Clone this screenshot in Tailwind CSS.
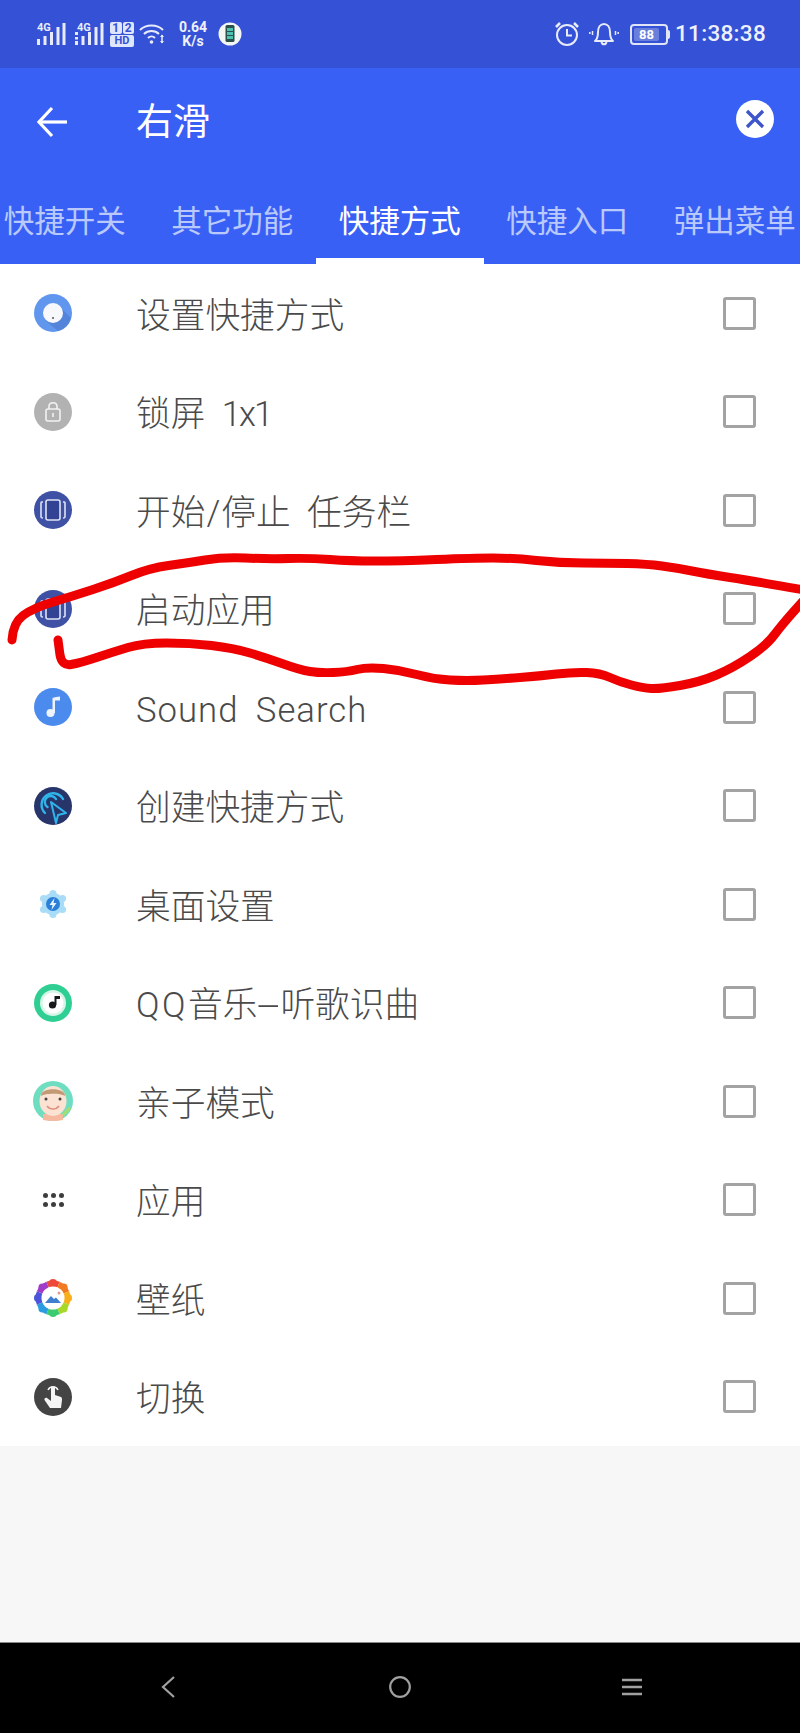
<!DOCTYPE html>
<html lang="zh-CN">
<head>
    <meta charset="UTF-8">
    <meta name="viewport" content="width=device-width, initial-scale=1.0">
    <title>右滑</title>
    <script src="https://cdn.jsdelivr.net/npm/@tailwindcss/browser@4"></script>
</head>
<body class="relative w-[800px] h-[1733px] overflow-hidden bg-[#f7f7f7] font-['Roboto','Noto_Sans_CJK_SC',sans-serif]">

    <!-- status bar -->
    <div class="h-[68px] bg-[#3551d5] flex items-center justify-between text-white pl-[37px] pr-[34px]">
        <div class="flex items-center">
            <svg width="29" height="24" viewBox="0 0 29 24" fill="#e8ecfa" class="mr-[9px]">
                <text x="0" y="9" font-size="11" font-weight="700" font-family="Roboto">4G</text>
                <rect x="0" y="17" width="3" height="6"/><rect x="6.5" y="14" width="3" height="9"/><rect x="13" y="10" width="3" height="13"/><rect x="19.5" y="5" width="3" height="18"/><rect x="25.5" y="1" width="3" height="22"/>
            </svg>
            <svg width="29" height="24" viewBox="0 0 29 24" fill="#e8ecfa" class="mr-[6px]">
                <text x="2" y="9" font-size="11" font-weight="700" font-family="Roboto">4G</text>
                <rect x="0" y="10" width="3" height="3"/><rect x="0" y="15" width="3" height="2.5"/><rect x="0" y="19" width="3" height="4"/><rect x="6.5" y="14" width="3" height="9"/><rect x="13" y="10" width="3" height="13"/><rect x="19.5" y="5" width="3" height="18"/><rect x="25.5" y="1" width="3" height="22"/>
            </svg>
            <div class="w-[24px] h-[25px] grid grid-cols-2 gap-[1px] mr-[5px] text-[#3551d5] text-[12px] leading-[12px] font-bold text-center">
                <span class="bg-[#dfe5fa] rounded-[2px]">1</span>
                <span class="bg-[#dfe5fa] rounded-[2px]">2</span>
                <span class="col-span-2 bg-[#dfe5fa] rounded-[2px] text-[11px]">HD</span>
            </div>
            <svg width="27" height="24" viewBox="0 0 27 24" fill="none" stroke="#e8ecfa" stroke-width="2" class="mr-[12px]">
                <path d="M1 8 C7 2 18 2 24 8"/><path d="M5 12 C9 8 16 8 20 12"/><path d="M9 16 C11 14 14 14 16 16"/>
                <circle cx="12.5" cy="20" r="1.8" fill="#e8ecfa" stroke="none"/>
                <path d="M23 13 v8" stroke-width="1.5"/><path d="M21 15 l2 -2.5 l2 2.5 z M21 19 l2 2.5 l2 -2.5 z" fill="#e8ecfa" stroke="none"/>
            </svg>
            <div class="w-[30px] text-center text-[#eef1fc] text-[14px] leading-[14px] font-bold mr-[10px]">0.64<br>K/s</div>
            <svg width="24" height="24" viewBox="0 0 24 24">
                <circle cx="12" cy="12" r="11.5" fill="#f4f6f4"/>
                <rect x="7.5" y="3" width="9" height="17" rx="1.5" fill="#2b4f4a"/>
                <rect x="9" y="6" width="6" height="3" fill="#4cc3b0"/><rect x="9" y="10" width="6" height="3" fill="#4cc3b0"/><rect x="9" y="14" width="6" height="3" fill="#4cc3b0"/>
            </svg>
        </div>
        <div class="flex items-center">
            <svg width="26" height="26" viewBox="0 0 26 26" fill="none" stroke="#e8ecfa" stroke-width="2" class="mr-[9px]">
                <circle cx="13" cy="14" r="10"/><path d="M13 8 v6.5 h5"/><path d="M2 6 l4 -4 M24 6 l-4 -4" stroke-width="2.5"/>
            </svg>
            <svg width="30" height="24" viewBox="0 0 30 24" fill="none" stroke="#e8ecfa" stroke-width="2" class="mr-[11px]">
                <path d="M6 19 C8.5 17 9 14 9 10 C9 5 11.5 2 15 2 C18.5 2 21 5 21 10 C21 14 21.5 17 24 19 Z" stroke-linejoin="round"/>
                <path d="M12.5 20 C13 23 17 23 17.5 20"/>
                <path d="M3.5 9 v4 M0.8 10 v2 M26.5 9 v4 M29.2 10 v2" stroke-width="1.5"/>
            </svg>
            <div class="relative w-[38px] h-[21px] border-2 border-[#dfe4f7] rounded-[4px] mr-[7px] p-[2px]">
                <div class="h-full w-[25px] bg-[#6a7fdc] rounded-[2px] flex items-center justify-center text-[13px] font-bold text-white leading-none">88</div>
                <div class="absolute right-[-4px] top-[4px] w-[2px] h-[9px] bg-[#dfe4f7] rounded-r-[2px]"></div>
            </div>
            <span class="text-[22.5px] font-medium tracking-[0.3px] text-[#eef1fc]">11:38:38</span>
        </div>
    </div>

    <!-- toolbar -->
    <div class="h-[196px] bg-[#3960f5] flex flex-col text-white">
        <div class="h-[106px] flex items-center">
            <svg width="32" height="32" viewBox="0 0 32 32" fill="none" stroke="white" stroke-width="3.2" class="ml-[36px] mr-[68px] mt-[2px]">
                <path d="M31 16 H3"/><path d="M16 2 L3 16 L16 30"/>
            </svg>
            <span class="text-[37px] leading-none mt-[3px]">右滑</span>
            <div class="ml-auto mr-[26px] mt-[-4px] w-[38px] h-[38px] rounded-full bg-white flex items-center justify-center">
                <svg width="20" height="20" viewBox="0 0 20 20" stroke="#3f55cc" stroke-width="3.4"><path d="M2 2 L18 18 M18 2 L2 18"/></svg>
            </div>
        </div>
        <div class="flex-1 flex ml-[-19px] text-[30.5px] text-[#b9c9fb]">
            <div class="w-[167.5px] shrink-0 flex items-center justify-center pt-[11px] border-b-[6px] border-transparent">快捷开关</div>
            <div class="w-[167.5px] shrink-0 flex items-center justify-center pt-[11px] border-b-[6px] border-transparent">其它功能</div>
            <div class="w-[167.5px] shrink-0 flex items-center justify-center pt-[11px] border-b-[6px] text-white border-white">快捷方式</div>
            <div class="w-[167.5px] shrink-0 flex items-center justify-center pt-[11px] border-b-[6px] border-transparent">快捷入口</div>
            <div class="w-[167.5px] shrink-0 flex items-center justify-center pt-[11px] border-b-[6px] border-transparent">弹出菜单</div>
        </div>
    </div>

    <!-- list -->
    <div class="bg-white grid grid-cols-1 auto-rows-[98.5px] text-[34.7px] text-[#4a4a4a] font-light">

        <div class="flex items-center pl-[34px] pr-[44px]">
            <svg width="38" height="38" viewBox="0 0 38 38">
                <circle cx="19" cy="19" r="19" fill="#6096ee"/>
                <path d="M11 26 L25 12 L37 24 A19 19 0 0 1 24 37 Z" fill="#5484da"/>
                <circle cx="19" cy="19" r="10" fill="#f6f8fc"/>
                <circle cx="19" cy="24" r="1" fill="#555"/>
            </svg>
            <span class="ml-[64px] pt-[5px] flex-1">设置快捷方式</span>
            <div class="w-[33px] h-[33px] border-[3px] border-[#a3a3a3] rounded-[3px]"></div>
        </div>

        <div class="flex items-center pl-[34px] pr-[44px]">
            <svg width="38" height="38" viewBox="0 0 38 38">
                <circle cx="19" cy="19" r="19" fill="#b2b2b2"/>
                <rect x="12" y="16" width="14" height="12" rx="2" fill="none" stroke="#f2f2f2" stroke-width="1.6"/>
                <path d="M15 16 V13.5 C15 8.5 23 8.5 23 13.5 V16" fill="none" stroke="#f2f2f2" stroke-width="1.6"/>
                <rect x="18.2" y="20" width="1.6" height="4" fill="#f2f2f2"/>
            </svg>
            <span class="ml-[64px] pt-[5px] flex-1">锁屏 <span class="ml-[8px] tracking-[-2px]">1x1</span></span>
            <div class="w-[33px] h-[33px] border-[3px] border-[#a3a3a3] rounded-[3px]"></div>
        </div>

        <div class="flex items-center pl-[34px] pr-[44px]">
            <svg width="38" height="38" viewBox="0 0 38 38">
                <circle cx="19" cy="19" r="19" fill="#3f51a5"/>
                <rect x="12" y="9" width="14" height="20" rx="2" fill="#324394" stroke="#dfe3f4" stroke-width="1.6"/>
                <path d="M9 11 H7.5 Q7 11 7 12 V26 Q7 27 9 27 M29 11 H30.5 Q31 11 31 12 V26 Q31 27 29 27" fill="none" stroke="#dfe3f4" stroke-width="1.6"/>
            </svg>
            <span class="ml-[64px] pt-[5px] flex-1">开始<span class="px-[1px]">/</span>停止 <span class="ml-[8px]">任务栏</span></span>
            <div class="w-[33px] h-[33px] border-[3px] border-[#a3a3a3] rounded-[3px]"></div>
        </div>

        <div class="flex items-center pl-[34px] pr-[44px]">
            <svg width="38" height="38" viewBox="0 0 38 38">
                <circle cx="19" cy="19" r="19" fill="#3f51a5"/>
                <rect x="12" y="9" width="14" height="20" rx="2" fill="#324394" stroke="#dfe3f4" stroke-width="1.6"/>
                <path d="M9 11 H7.5 Q7 11 7 12 V26 Q7 27 9 27 M29 11 H30.5 Q31 11 31 12 V26 Q31 27 29 27" fill="none" stroke="#dfe3f4" stroke-width="1.6"/>
            </svg>
            <span class="ml-[64px] pt-[5px] flex-1">启动应用</span>
            <div class="w-[33px] h-[33px] border-[3px] border-[#a3a3a3] rounded-[3px]"></div>
        </div>

        <div class="flex items-center pl-[34px] pr-[44px]">
            <svg width="38" height="38" viewBox="0 0 38 38">
                <circle cx="19" cy="19" r="19" fill="#4c8bee"/>
                <circle cx="16.5" cy="25" r="4" fill="#eef4fe"/>
                <path d="M18.5 25 V10 C20 9 24 9 26 8.5 V12.5 H21 V25 Z" fill="#eef4fe"/>
            </svg>
            <span class="ml-[64px] pt-[5px] flex-1 tracking-[1px]">Sound <span class="ml-[8px]">Search</span></span>
            <div class="w-[33px] h-[33px] border-[3px] border-[#a3a3a3] rounded-[3px]"></div>
        </div>

        <div class="flex items-center pl-[34px] pr-[44px]">
            <svg width="38" height="38" viewBox="0 0 38 38">
                <circle cx="19" cy="19" r="19" fill="#28356a"/>
                <g fill="none" stroke="#2fb5ea" stroke-width="2.4" stroke-linecap="round" stroke-linejoin="round">
                    <path d="M11 26 A11.5 11.5 0 1 1 29 12"/>
                    <path d="M13.5 20 A6 6 0 1 1 22 12"/>
                    <path d="M17 15 L32 26 L24 28 L22 36 Z" stroke-width="2"/>
                </g>
            </svg>
            <span class="ml-[64px] pt-[5px] flex-1">创建快捷方式</span>
            <div class="w-[33px] h-[33px] border-[3px] border-[#a3a3a3] rounded-[3px]"></div>
        </div>

        <div class="flex items-center pl-[34px] pr-[44px]">
            <svg width="38" height="38" viewBox="0 0 38 38">
                <g fill="#a9dcf6">
                    <circle cx="19" cy="8.5" r="3.5"/><circle cx="19" cy="29.5" r="3.5"/><circle cx="9.5" cy="13.5" r="3.5"/><circle cx="28.5" cy="13.5" r="3.5"/><circle cx="9.5" cy="24.5" r="3.5"/><circle cx="28.5" cy="24.5" r="3.5"/>
                    <circle cx="19" cy="19" r="11"/>
                </g>
                <circle cx="19" cy="19" r="7" fill="#2b7fd9"/>
                <path d="M20.5 13 L15.5 20 H18.5 L17.5 25 L22.5 18 H19.5 Z" fill="#e8f5fd"/>
            </svg>
            <span class="ml-[64px] pt-[5px] flex-1">桌面设置</span>
            <div class="w-[33px] h-[33px] border-[3px] border-[#a3a3a3] rounded-[3px]"></div>
        </div>

        <div class="flex items-center pl-[34px] pr-[44px]">
            <svg width="38" height="38" viewBox="0 0 38 38">
                <circle cx="19" cy="19" r="19" fill="#2fcf94"/>
                <circle cx="19" cy="19" r="13" fill="#d5f5e8"/>
                <circle cx="19" cy="19" r="10.5" fill="#ffffff"/>
                <circle cx="18.5" cy="21" r="3.6" fill="#16181a"/>
                <path d="M20.5 21 V12 H26 V15 H22.5 V21 Z" fill="#16181a"/>
            </svg>
            <span class="ml-[64px] pt-[5px] flex-1"><span class="tracking-[2.5px]">QQ</span>音乐<span class="inline-block w-[23px] text-center scale-x-[2.4]">-</span>听歌识曲</span>
            <div class="w-[33px] h-[33px] border-[3px] border-[#a3a3a3] rounded-[3px]"></div>
        </div>

        <div class="flex items-center pl-[34px] pr-[44px]">
            <svg width="40" height="40" viewBox="0 0 40 40" class="ml-[-1px] mr-[-1px]">
                <circle cx="20" cy="20" r="20" fill="#6fddc0"/>
                <path d="M10 39 V33 H30 V39 Q20 41 10 39 Z" fill="#f6b9a0"/>
                <ellipse cx="20" cy="20" rx="13.5" ry="15" fill="#fbe2d2"/>
                <path d="M8 15 C7 6 33 6 32 15 C28 12 12 12 8 15 Z" fill="#c29a76"/>
                <circle cx="13" cy="18" r="1.5" fill="#444"/><circle cx="27" cy="18" r="1.5" fill="#444"/>
                <path d="M14 25 C17 29 23 29 26 25" fill="none" stroke="#e08f80" stroke-width="1.5"/>
                <path d="M30 34 L37 27" stroke="#a8dc70" stroke-width="3"/>
            </svg>
            <span class="ml-[64px] pt-[5px] flex-1">亲子模式</span>
            <div class="w-[33px] h-[33px] border-[3px] border-[#a3a3a3] rounded-[3px]"></div>
        </div>

        <div class="flex items-center pl-[34px] pr-[44px]">
            <div class="w-[38px] h-[38px] flex items-center justify-center">
                <div class="grid grid-cols-3 gap-x-[3px] gap-y-[4px]">
                    <div class="w-[5px] h-[5px] rounded-full bg-[#3d3d3d]"></div>
                    <div class="w-[5px] h-[5px] rounded-full bg-[#3d3d3d]"></div>
                    <div class="w-[5px] h-[5px] rounded-full bg-[#3d3d3d]"></div>
                    <div class="w-[5px] h-[5px] rounded-full bg-[#3d3d3d]"></div>
                    <div class="w-[5px] h-[5px] rounded-full bg-[#3d3d3d]"></div>
                    <div class="w-[5px] h-[5px] rounded-full bg-[#3d3d3d]"></div>
                </div>
            </div>
            <span class="ml-[64px] pt-[5px] flex-1">应用</span>
            <div class="w-[33px] h-[33px] border-[3px] border-[#a3a3a3] rounded-[3px]"></div>
        </div>

        <div class="flex items-center pl-[34px] pr-[44px]">
            <svg width="38" height="38" viewBox="0 0 38 38">
                <g fill="none" stroke-width="7">
                    <path d="M13.64 6.07 A14 14 0 0 1 24.36 6.07" stroke="#ee4a3c"/>
                    <path d="M24.36 6.07 A14 14 0 0 1 31.93 13.64" stroke="#f27a20"/>
                    <path d="M31.93 13.64 A14 14 0 0 1 31.93 24.36" stroke="#f8ae1a"/>
                    <path d="M31.93 24.36 A14 14 0 0 1 24.36 31.93" stroke="#a8d828"/>
                    <path d="M24.36 31.93 A14 14 0 0 1 13.64 31.93" stroke="#3ccb70"/>
                    <path d="M13.64 31.93 A14 14 0 0 1 6.07 24.36" stroke="#2a9de0"/>
                    <path d="M6.07 24.36 A14 14 0 0 1 6.07 13.64" stroke="#4a55d8"/>
                    <path d="M6.07 13.64 A14 14 0 0 1 13.64 6.07" stroke="#a03cc8"/>
                </g>
                <circle cx="19" cy="4" r="4" fill="#ee4a3c"/>
                <circle cx="29.6" cy="8.4" r="4" fill="#f27a20"/>
                <circle cx="34" cy="19" r="4" fill="#f8ae1a"/>
                <circle cx="29.6" cy="29.6" r="4" fill="#a8d828"/>
                <circle cx="19" cy="34" r="4" fill="#3ccb70"/>
                <circle cx="8.4" cy="29.6" r="4" fill="#2a9de0"/>
                <circle cx="4" cy="19" r="4" fill="#4a55d8"/>
                <circle cx="8.4" cy="8.4" r="4" fill="#a03cc8"/>
                <circle cx="19" cy="19" r="11.5" fill="#fff"/>
                <path d="M11 24 L17 17 L20 20 L22 18.5 L27 24 Z" fill="#3f7fd0"/>
                <circle cx="25" cy="14" r="1.5" fill="#e89a8a"/>
            </svg>
            <span class="ml-[64px] pt-[5px] flex-1">壁纸</span>
            <div class="w-[33px] h-[33px] border-[3px] border-[#a3a3a3] rounded-[3px]"></div>
        </div>

        <div class="flex items-center pl-[34px] pr-[44px]">
            <svg width="38" height="38" viewBox="0 0 38 38">
                <circle cx="19" cy="19" r="19" fill="#444444"/>
                <path d="M17 10 C17 8 21 8 21 10 V17 L27 19 C28 19.5 28 21 28 22 L27 30 H16 L10.5 22 C10 20 12 19.5 13 20 L17 23 Z" fill="#f5f5f5"/>
                <path d="M14 12 A5.5 5.5 0 0 1 24 12" fill="none" stroke="#f5f5f5" stroke-width="1.5"/>
            </svg>
            <span class="ml-[64px] pt-[5px] flex-1">切换</span>
            <div class="w-[33px] h-[33px] border-[3px] border-[#a3a3a3] rounded-[3px]"></div>
        </div>
    </div>

    <!-- navigation bar -->
    <div class="absolute left-0 right-0 bottom-0 h-[91px] bg-black border-t border-[#888] flex items-center justify-center pb-[2px]">
        <div class="w-[232px] flex justify-center">
            <svg width="14" height="22" viewBox="0 0 14 22" fill="none" stroke="#a0a0a0" stroke-width="2.2"><path d="M13 1 L2 11 L13 21"/></svg>
        </div>
        <div class="w-[232px] flex justify-center">
            <svg width="22" height="22" viewBox="0 0 22 22" fill="none" stroke="#a0a0a0" stroke-width="2.2"><circle cx="11" cy="11" r="9.8"/></svg>
        </div>
        <div class="w-[232px] flex justify-center">
            <svg width="20" height="20" viewBox="0 0 20 20" fill="none" stroke="#a0a0a0" stroke-width="2.6"><path d="M0 3 H20 M0 10 H20 M0 17 H20"/></svg>
        </div>
    </div>

    <!-- red marker scribble drawn over the list -->
    <svg class="absolute left-0 top-0 pointer-events-none" width="800" height="1733" fill="none" stroke="#ef0000" stroke-width="9" stroke-linecap="round" stroke-linejoin="round">
        <path d="M12 640 Q13 623 23 615.5 Q33 608 53 602 Q73 596 93 589.5 Q113 583 131.5 575.5 Q150 568 168.5 565.5 Q187 563 205 560 Q223 557 245 558 Q267 559 288.5 558.5 Q310 558 330 559.5 Q350 561 375 561 Q400 561 436.5 559.5 Q473 558 493 558 Q513 558 536.5 560.5 Q560 563 583.5 563 Q607 563 627 563.5 Q647 564 662 566 Q677 568 692 571 Q707 574 730 577.5 Q753 581 804 590"/>
        <path d="M58 640 L60 655 Q62 666 71 664.5 Q80 663 96.5 657.5 Q113 652 128 647.5 Q143 643 166.5 643 Q190 643 211.5 645.5 Q233 648 250 653 Q267 658 283.5 664 Q300 670 310 671.5 Q320 673 333.5 672.5 Q347 672 357 669.5 Q367 667 383.5 668.5 Q400 670 416.5 674.5 Q433 679 450 680 Q467 681 483.5 680 Q500 679 520 677.5 Q540 676 556.5 674 Q573 672 586.5 672.5 Q600 673 610 677.5 Q620 682 631.5 685 Q643 688 651.5 688.5 Q660 689 680 685.5 Q700 682 716.5 675 Q733 668 750 656.5 Q767 645 775 634 Q783 623 804 600"/>
    </svg>
</body>
</html>
